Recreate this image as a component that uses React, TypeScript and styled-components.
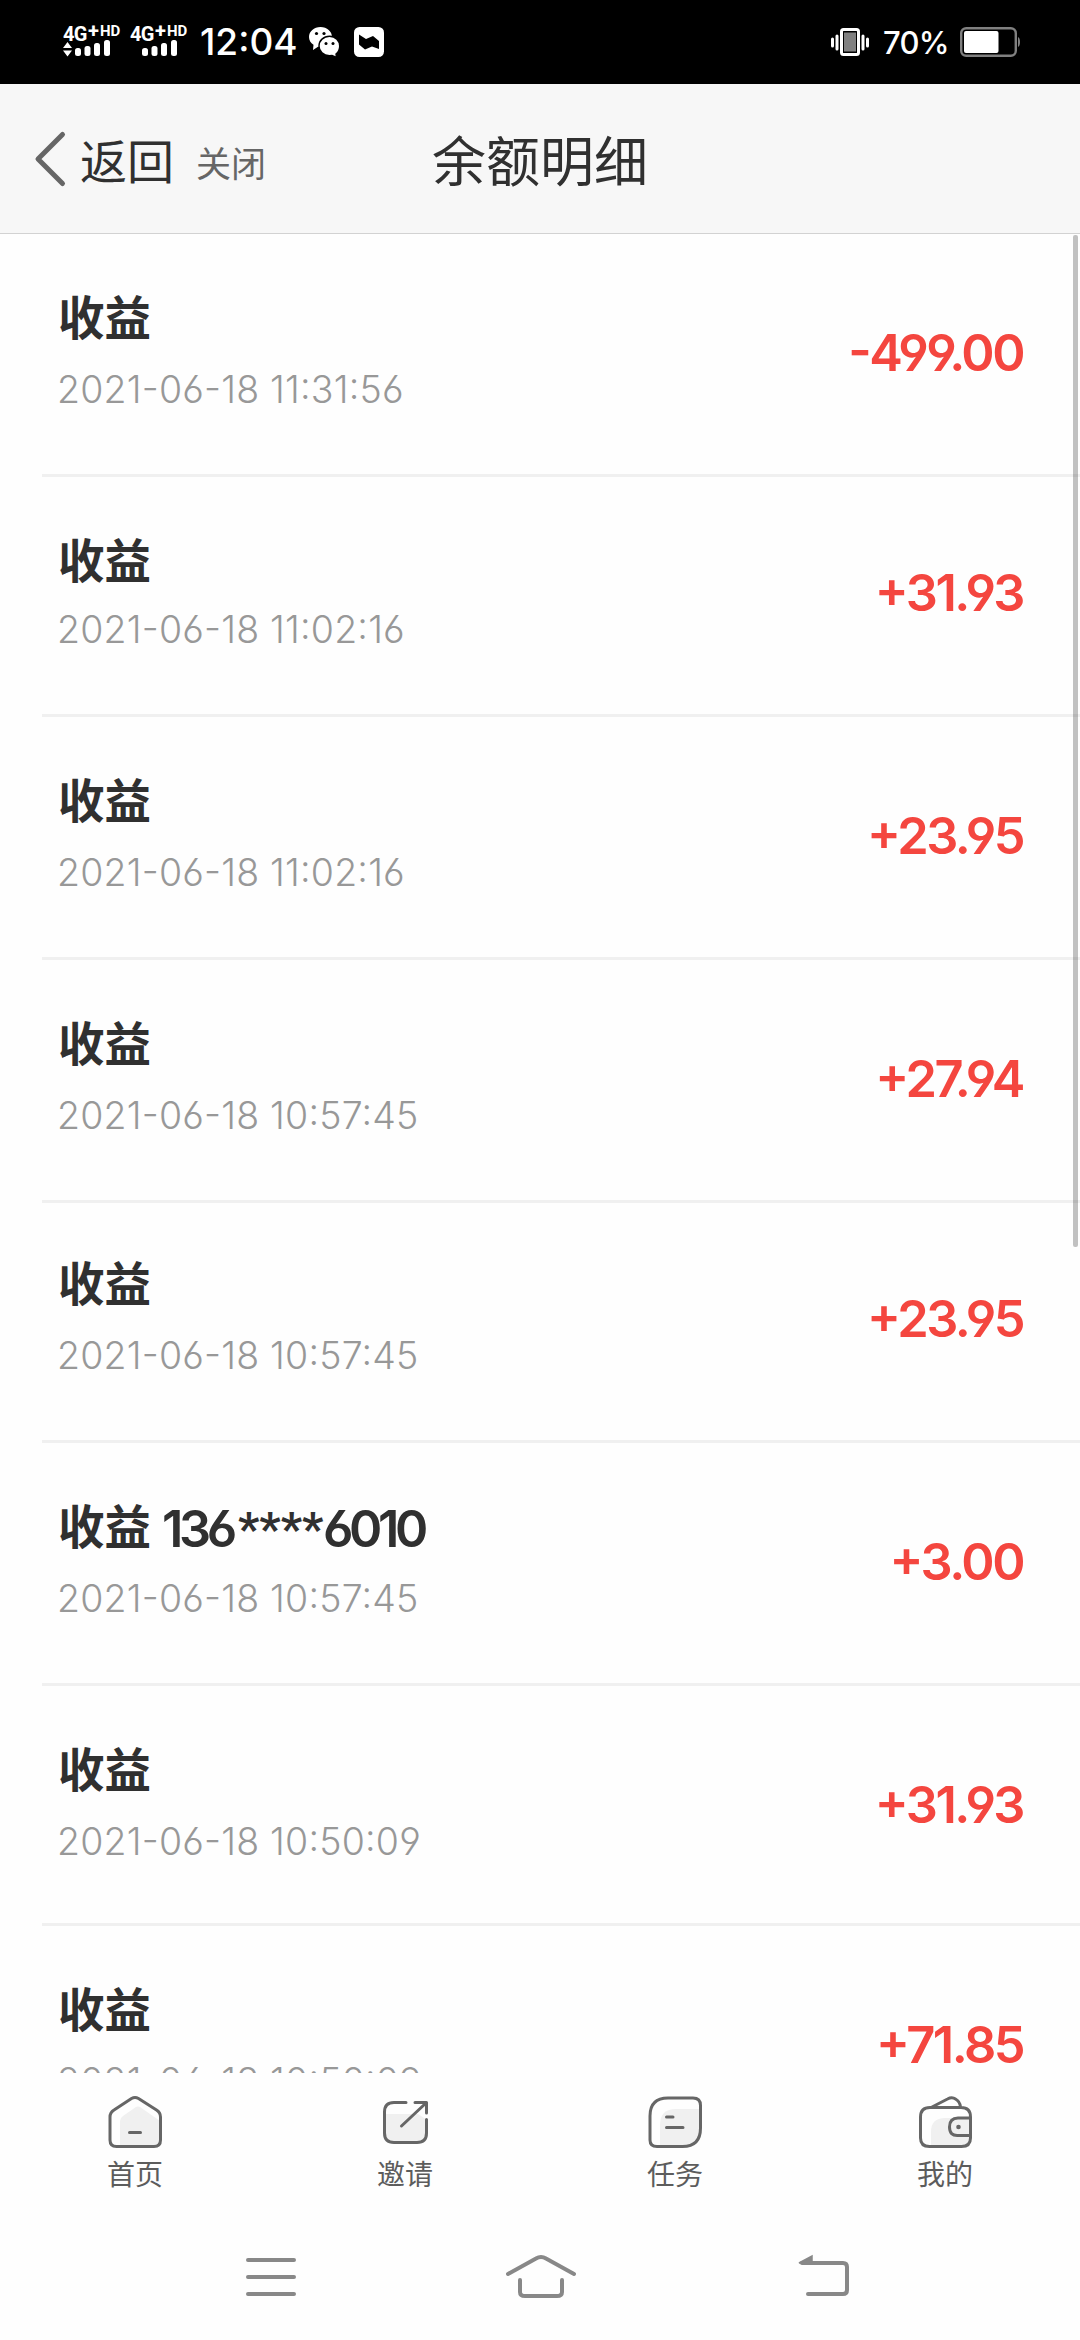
import React from 'react';
import styled, { createGlobalStyle } from 'styled-components';

const Global = createGlobalStyle`
  * { box-sizing: border-box; }
  body {
    margin: 0;
    background: #fefefe;
    font-family: Inter, "Noto Sans CJK SC", sans-serif;
  }
  svg { display: block; flex: none; overflow: visible; }
`;

const Screen = styled.div`
  width: 1080px;
  height: 2340px;
  display: flex;
  flex-direction: column;
  overflow: hidden;
  background: #fefefe;
`;

/* ---------- status bar ---------- */
const StatusBar = styled.header`
  height: 84px;
  flex: none;
  display: flex;
  justify-content: space-between;
  align-items: center;
  padding: 0 60px 0 63px;
  background: #000;
  color: #fff;
`;
const StatusGroup = styled.div`
  display: flex;
  align-items: center;
`;
const Signal = styled.div`
  width: 67px;
  height: 34px;
  display: flex;
  flex-direction: column;
`;
const Network = styled.div`
  height: 16px;
  display: flex;
  align-items: flex-start;
  font-family: Roboto, sans-serif;
  font-weight: 700;
`;
const Generation = styled.span`
  width: 25px;
  font-size: 20px;
  line-height: 18px;
  letter-spacing: -0.6px;
`;
const Plus = styled.span`
  width: 12px;
  font-size: 20px;
  line-height: 12px;
`;
const Hd = styled.span`
  font-size: 15px;
  line-height: 13px;
`;
const Clock = styled.span`
  width: 108px;
  font-size: 37px;
  line-height: 44px;
  font-weight: 500;
  letter-spacing: 0;
  margin-left: 3px;
`;
const StatusIcon = styled.div<{ $left: number }>`
  margin-left: ${p => p.$left}px;
`;
const Percent = styled.span`
  width: 77px;
  margin-left: 14px;
  font-size: 31px;
  line-height: 40px;
  font-weight: 500;
  letter-spacing: -0.8px;
  padding-top: 2px;
`;

/* ---------- title bar ---------- */
const TitleBar = styled.nav`
  height: 150px;
  flex: none;
  display: flex;
  align-items: center;
  padding: 0 0 0 35px;
  background: #f7f7f7;
  border-bottom: 1px solid #d2d2d2;
`;
const BackLabel = styled.span`
  margin-left: 15px;
  width: 102px;
  font-size: 47px;
  line-height: 60px;
  color: #303030;
  padding-top: 7px;
`;
const CloseLabel = styled.span`
  margin-left: 14px;
  width: 236px;
  font-size: 35px;
  line-height: 50px;
  color: #666;
  padding-top: 11px;
`;
const PageTitle = styled.h1`
  margin: 0;
  padding-top: 8px;
  font-size: 54px;
  line-height: 70px;
  font-weight: 400;
  color: #303030;
`;

/* ---------- list ---------- */
const List = styled.main`
  position: relative;
  flex: none;
  height: 1839px;
  overflow: hidden;
  font-feature-settings: "case" 1, "cv03" 1, "cv04" 1;
`;
const Row = styled.section<{ $height: number }>`
  height: ${p => p.$height}px;
  margin-left: 42px;
  padding: 0 57px 0 16px;
  display: flex;
  justify-content: space-between;
  border-bottom: 3px solid #f0f0f0;
`;
const Details = styled.div<{ $top: number }>`
  padding-top: ${p => p.$top}px;
`;
const Title = styled.div`
  height: 60px;
  display: flex;
  align-items: center;
  font-size: 46.5px;
  line-height: 60px;
  font-weight: 700;
  color: #303030;
`;
const Digits = styled.span<{ $left?: number; $width: number }>`
  width: ${p => p.$width}px;
  margin-left: ${p => p.$left ?? 0}px;
  padding-top: 3px;
  font-size: 50.5px;
  font-weight: 600;
  letter-spacing: -4.4px;
`;
const Mask = styled.span`
  width: 85px;
  padding-top: 3px;
  font-family: Roboto, sans-serif;
  font-size: 47px;
  font-weight: 700;
`;
const Time = styled.div<{ $gap: number }>`
  margin-top: ${p => p.$gap}px;
  margin-left: -1px;
  font-size: 37.5px;
  line-height: 44px;
  font-weight: 350;
  letter-spacing: 0.2px;
  color: #989898;
  white-space: nowrap;
`;
const Amount = styled.div<{ $top: number }>`
  padding-top: ${p => p.$top}px;
  font-size: 50.5px;
  line-height: 60px;
  font-weight: 600;
  letter-spacing: -2.5px;
  color: #f4463f;
`;
const ScrollThumb = styled.div`
  position: absolute;
  top: 1px;
  right: 2px;
  width: 5px;
  height: 1012px;
  border-radius: 2px;
  background: rgba(0, 0, 0, 0.24);
`;

/* ---------- tabs and system navigation ---------- */
const TabBar = styled.nav`
  height: 137px;
  flex: none;
  display: grid;
  grid-template-columns: repeat(4, 1fr);
  padding-top: 23px;
`;
const Tab = styled.div`
  display: flex;
  flex-direction: column;
  align-items: center;
  gap: 5px;
  font-size: 28px;
  line-height: 40px;
  color: #5c5c5c;
`;
const SystemNav = styled.footer`
  height: 130px;
  flex: none;
  display: flex;
  padding: 35px 0 0 246px;
`;
const NavItem = styled.div<{ $width: number }>`
  width: ${p => p.$width}px;
`;

function SignalMeter({ label, arrows }: { label: string; arrows?: boolean }) {
  return (
    <Signal>
      <Network><Generation>{label}</Generation><Plus>+</Plus><Hd>HD</Hd></Network>
      <svg width="50" height="18" viewBox="0 0 50 18" fill="#fff">
        {arrows && <path d="M0 7 4.500 1 9 7ZM0 9.500h9L4.500 15.500Z" />}
        <rect x="12" y="7" width="6" height="8" rx="2.500" />
        <rect x="21.500" y="5" width="6" height="10" rx="2.500" />
        <rect x="31" y="2" width="6" height="13" rx="2.500" />
        <rect x="41" y="-1" width="6" height="16" rx="2.500" />
      </svg>
    </Signal>
  );
}

const WeChat = () => (
  <svg width="31" height="30" viewBox="0 0 31 30">
    <path fill="#fff" d="M11.500 0C5 0 0 4.500 0 10c0 3.200 1.700 6 4.500 7.800L4 23l5-3.200 2.500.2C18 20 23 15.500 23 10S18 0 11.500 0Z" />
    <path fill="#fff" stroke="#000" strokeWidth="1.400" d="M20.500 9.300c-6 0-10.500 4.300-10.500 9.700s4.500 9.700 10.500 9.700l2.500-.2 4.500 2-.5-3.500c2.300-1.800 3.700-4.700 3.700-8 0-5.400-4.200-9.700-10.200-9.700Z" />
    <g fill="#000"><circle cx="7.500" cy="6.500" r="1.600" /><circle cx="15" cy="6.500" r="1.600" /><circle cx="17" cy="16.500" r="1.500" /><circle cx="24" cy="16.500" r="1.500" /></g>
  </svg>
);
const PictureApp = () => (
  <svg width="30" height="30" viewBox="0 0 30 30">
    <rect width="30" height="30" rx="5.500" fill="#fff" />
    <path d="M5 7.500 12 12l7-3 6 5v8l-7-2.500-7 3-6-5Z" />
  </svg>
);
const Vibrate = () => (
  <svg width="38" height="30" viewBox="0 0 38 30" fill="none" stroke="#fff">
    <rect x="10.500" y="2.500" width="17" height="25" rx="2" strokeWidth="3" />
    <path fill="#808080" stroke="none" d="M13 5.500h12v19H13z" />
    <path d="M1.500 12v7M6 9v13M32 9v13M36.500 12v7" strokeWidth="3" strokeLinecap="round" />
  </svg>
);
const Battery = () => (
  <svg width="60" height="30" viewBox="0 0 60 30">
    <rect x="1.200" y="1.200" width="54.600" height="27.600" rx="5" fill="none" stroke="#808080" strokeWidth="2.400" />
    <rect x="4" y="4" width="34.500" height="22" rx="2" fill="#fff" />
    <path d="M58 10q2 1 2 5t-2 5Z" fill="#808080" />
  </svg>
);

const lineProps = { fill: 'none', stroke: '#666', strokeWidth: 3, strokeLinecap: 'round', strokeLinejoin: 'round' } as const;

const HomeIcon = () => (
  <svg width="54" height="54" viewBox="0 0 54 54">
    <path fill="#f0f0f0" d="M12 49V25q0-3 3-5l13-9q2-1 4 0l20 14v20q0 5-5 5Z" />
    <path {...lineProps} d="M23.500 2.500q3.500-2 7 0L48.500 14Q52.500 16.500 52.500 21v23q0 6.500-6.500 6.500H8.500Q2 50.500 2 44V21q0-4.500 4-7Z" />
    <path {...lineProps} d="M21.500 36.500h11" />
  </svg>
);
const InviteIcon = () => (
  <svg width="54" height="54" viewBox="0 0 54 54">
    <path fill="#f0f0f0" d="M7 18h33l9 6v14q0 9-8 9H15q-8 0-8-9Z" />
    <path {...lineProps} d="M28 6.500H16Q6.500 6.500 6.500 16v21q0 9.500 9.500 9.500h23q9.500 0 9.500-9.500V23.500M37 6.500h11.500V17M48 7 23.500 30" />
  </svg>
);
const TaskIcon = () => (
  <svg width="54" height="54" viewBox="0 0 54 54">
    <path fill="#f0f0f0" d="M12 50V29q0-16 16-16h24v18q0 19-19 19Z" />
    <path {...lineProps} d="M20 2h25q7.500 0 7.500 7.500V32q0 18.500-18 18.500H9Q2 50.500 2 44V20Q2 2 20 2ZM18.500 21H25M18.500 31.500H35" />
  </svg>
);
const WalletIcon = () => (
  <svg width="54" height="54" viewBox="0 0 54 54">
    <path fill="#f0f0f0" d="M13 50V36q0-14 14-14h25v20q0 8-8 8Z" />
    <path {...lineProps} d="M12 11.500h31q9.500 0 9.500 9.500v21q0 8.500-9 8.500h-32Q2.500 50.500 2.500 42V21q0-9.500 9.500-9.500ZM14 11 29.500 3Q34 .5 37.500 3q4.500 2.500 5 8M52 22H40q-8.500 0-8.500 9t8.500 8.500h12" />
    <circle cx="40.500" cy="31" r="2.300" fill="#666" />
  </svg>
);

type Entry = {
  phone?: [string, string, string];
  time: string;
  amount: string;
  height: number;
  titleTop?: number;
  gap?: number;
  amountTop?: number;
};

const entries: Entry[] = [
  { time: '2021-06-18 11:31:56', amount: '-499.00', height: 243 },
  { time: '2021-06-18 11:02:16', amount: '+31.93', height: 240, gap: 17, amountTop: 86 },
  { time: '2021-06-18 11:02:16', amount: '+23.95', height: 243 },
  { time: '2021-06-18 10:57:45', amount: '+27.94', height: 243 },
  { time: '2021-06-18 10:57:45', amount: '+23.95', height: 240, titleTop: 51, amountTop: 86 },
  { phone: ['136', '****', '6010'], time: '2021-06-18 10:57:45', amount: '+3.00', height: 243 },
  { time: '2021-06-18 10:50:09', amount: '+31.93', height: 240 },
  { time: '2021-06-18 10:50:09', amount: '+71.85', height: 243 },
];

export default function App() {
  return (
    <Screen>
      <Global />
      <StatusBar>
        <StatusGroup>
          <SignalMeter label="4G" arrows />
          <SignalMeter label="4G" />
          <Clock>12:04</Clock>
          <StatusIcon $left={1}><WeChat /></StatusIcon>
          <StatusIcon $left={14}><PictureApp /></StatusIcon>
        </StatusGroup>
        <StatusGroup>
          <Vibrate />
          <Percent>70%</Percent>
          <Battery />
        </StatusGroup>
      </StatusBar>

      <TitleBar>
        <svg width="30" height="54" viewBox="0 0 30 54" fill="none" stroke="#666" strokeWidth="5" strokeLinecap="round" strokeLinejoin="round">
          <path d="M27.500 2.500 3 27l24.500 24.500" />
        </svg>
        <BackLabel>返回</BackLabel>
        <CloseLabel>关闭</CloseLabel>
        <PageTitle>余额明细</PageTitle>
      </TitleBar>

      <List>
        {entries.map((e, i) => (
          <Row key={i} $height={e.height}>
            <Details $top={e.titleTop ?? 54}>
              <Title>
                收益
                {e.phone && (
                  <>
                    <Digits $left={11} $width={76}>{e.phone[0]}</Digits>
                    <Mask>{e.phone[1]}</Mask>
                    <Digits $width={104}>{e.phone[2]}</Digits>
                  </>
                )}
              </Title>
              <Time $gap={e.gap ?? 20}>{e.time}</Time>
            </Details>
            <Amount $top={e.amountTop ?? 89}>{e.amount}</Amount>
          </Row>
        ))}
        <ScrollThumb />
      </List>

      <TabBar>
        <Tab><HomeIcon />首页</Tab>
        <Tab><InviteIcon />邀请</Tab>
        <Tab><TaskIcon />任务</Tab>
        <Tab><WalletIcon />我的</Tab>
      </TabBar>

      <SystemNav>
        <NavItem $width={260}>
          <svg width="50" height="62" viewBox="0 -10 50 62" stroke="#888" strokeWidth="4" strokeLinecap="round">
            <path d="M2 5h46M2 22h46M2 39h46" />
          </svg>
        </NavItem>
        <NavItem $width={292}>
          <svg width="70" height="64" viewBox="0 -10 70 64" fill="none" stroke="#888" strokeWidth="4" strokeLinecap="round">
            <path d="M2 19 30 3.500q5-3 10 0L68 19M14 25v12q0 4 5 4h32q5 0 5-4V25" />
          </svg>
        </NavItem>
        <NavItem $width={52}>
          <svg width="52" height="62" viewBox="0 -10 52 62" fill="none" stroke="#888" strokeWidth="4" strokeLinecap="round">
            <path d="M4 8h41q4 0 4 4v23q0 4-4 4H10" />
            <path d="M1 8 14 1v7Z" fill="#888" strokeWidth="1.500" />
          </svg>
        </NavItem>
      </SystemNav>
    </Screen>
  );
}
